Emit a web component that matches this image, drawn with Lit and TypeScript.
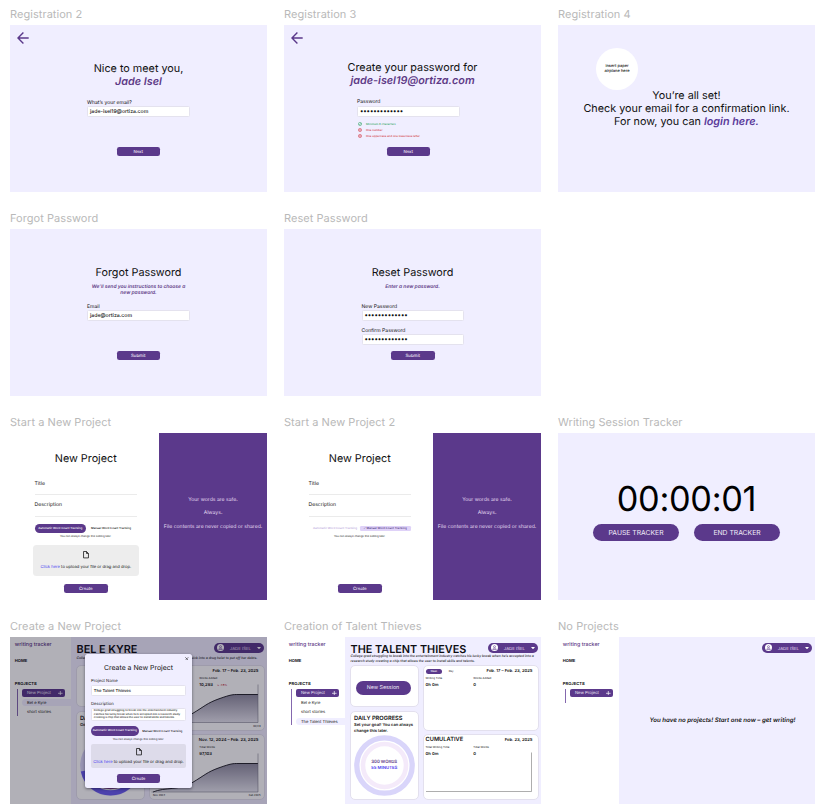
import { LitElement, html, svg, css } from "lit";
import { customElement } from "lit/decorators.js";

const DOTS = "•".repeat(13);

@customElement("app-root")
export class AppRoot extends LitElement {
  static styles = css`
    :host {
      display: block;
      width: 827px;
      height: 812px;
      overflow: hidden;
      background: #fff;
      color: #111;
      font-family: Inter, "Liberation Sans", sans-serif;
      text-rendering: geometricPrecision;
    }
    * { box-sizing: border-box; }
    svg { display: block; flex: none; }
    .board {
      display: grid;
      grid-template-columns: repeat(3, 257px);
      grid-auto-rows: 204px;
      column-gap: 17px;
      padding: 5px 0 0 10px;
    }
    .label {
      height: 20px;
      line-height: 19px;
      font-size: 11px;
      color: #b9b9b9;
      letter-spacing: 0.05px;
      white-space: nowrap;
    }
    .frame {
      position: relative;
      width: 257px;
      height: 167px;
      background: #f0eeff;
      overflow: hidden;
      white-space: nowrap;
    }
    .frame.split, .frame.dash { display: flex; background: #fff; }
    .back { position: absolute; left: 6.5px; top: 6.5px; }

    /* account screens */
    .h {
      font-size: 10.8px;
      line-height: 13px;
      text-align: center;
    }
    .auth { padding-top: 36.8px; }
    .auth.up { padding-top: 36.3px; }
    .em { font-weight: 600; font-style: italic; color: #5e3a86; }
    .link { font-weight: 600; font-style: italic; color: #5a3a9a; }
    .sub {
      margin-top: 5.4px;
      font-size: 4.95px;
      line-height: 6.2px;
      text-align: center;
      font-weight: 600;
      font-style: italic;
      color: #5e3a86;
    }
    .form { width: 102.5px; margin: 11.3px 0 0 77px; }
    .form.reg3 { margin-left: 73px; }
    .form.forgot { margin-top: 6.9px; }
    .form.reset { margin: 13.1px 0 0 77.5px; }
    .fl { height: 6px; font-size: 5.05px; line-height: 8.8px; }
    .in {
      height: 11px;
      margin-top: 1px;
      padding-left: 2px;
      font-size: 5.2px;
      line-height: 10.6px;
      background: #fff;
      border: 1px solid #e4e2ee;
      border-radius: 1.5px;
      font-weight: 500;
    }
    .reg3 .fl { line-height: 6.6px; }
    .forgot .in, .reset .in { margin-top: 0.6px; }
    .in.dots { font-size: 6.4px; letter-spacing: -0.1px; line-height: 9.6px; }
    .in + .fl { margin-top: 6px; }
    .btn {
      width: 43.5px;
      height: 9.2px;
      margin: 29.5px auto 0;
      border-radius: 2.3px;
      background: #5b398b;
      color: #efeaf7;
      font-size: 4.3px;
      line-height: 11.4px;
      text-align: center;
      font-weight: 500;
    }
    .reg3 .btn { margin-top: 7.8px; }
    .reset .btn { margin-top: 6px; }
    .rules {
      display: grid;
      row-gap: 0;
      padding: 4px 0 0 1px;
      font-size: 2.8px;
      font-weight: 500;
    }
    .rule { display: flex; align-items: center; gap: 4px; height: 6.2px; color: #d23b45; }
    .rule.ok { color: #2ea563; }
    .plane {
      display: flex;
      align-items: center;
      justify-content: center;
      width: 42px;
      height: 42px;
      margin: 23px 0 0 38px;
      border-radius: 50%;
      background: #fff;
      font-size: 4px;
      line-height: 4.9px;
      text-align: center;
      font-weight: 500;
    }
    .set { margin-top: -0.6px; }

    /* project form */
    .left { width: 149px; padding: 18.5px 22px 0 24.5px; }
    .line {
      height: 22px;
      padding-top: 7.5px;
      font-size: 5.1px;
      line-height: 6px;
      border-bottom: 1px solid #ebebeb;
    }
    .line.second { padding-top: 7.2px; }
    .line.first { height: 23.5px; margin-top: 7px; padding-top: 9.2px; }
    .toggle {
      display: flex;
      align-items: center;
      height: 9.4px;
      margin-top: 6.7px;
      font-size: 2.9px;
      font-weight: 500;
    }
    .toggle .on {
      width: 51.5px;
      height: 9.4px;
      line-height: 9.4px;
      margin-right: 5px;
      border-radius: 5px;
      background: #5b398b;
      color: #fff;
      text-align: center;
    }
    .toggle .off { width: 51px; padding-left: 4.5px; color: #bba9dc; }
    .toggle .chip {
      width: 51px;
      height: 5px;
      line-height: 5px;
      border-radius: 1.3px;
      background: #dfd2f8;
      color: #4c3480;
      text-align: center;
    }
    .note { font-size: 2.7px; line-height: 4px; margin-top: 1.3px; text-align: center; width: 102.5px; }
    .drop {
      display: flex;
      flex-direction: column;
      align-items: center;
      width: 106px;
      height: 31px;
      margin: 6.8px 0 0 -1.7px;
      padding-top: 6px;
      border-radius: 3.5px;
      background: #ededed;
      font-size: 4.12px;
      line-height: 5px;
    }
    .drop svg { margin-bottom: 5.8px; }
    .blue { color: #4b3df0; }
    .left .btn { margin: 7.8px 0 0 29.5px; }
    .left .btn.low { margin-top: 45.6px; }
    .right {
      display: flex;
      flex-direction: column;
      justify-content: center;
      width: 108px;
      background: #5b398b;
      color: #e3daf0;
      font-size: 5.1px;
      line-height: 13.7px;
      text-align: center;
      padding-bottom: 4.6px;
    }

    /* session tracker */
    .timer { padding-top: 45.5px; font-size: 34.3px; letter-spacing: -0.3px; line-height: 42px; color: #000; text-align: center; }
    .pair { display: flex; justify-content: center; gap: 15.7px; margin-top: 3.5px; }
    .big {
      width: 85.3px;
      height: 17px;
      border-radius: 9px;
      background: #5b398b;
      color: #efeaf7;
      font-size: 6.8px;
      line-height: 17.4px;
      text-align: center;
    }

    /* dashboard */
    .side { width: 60.5px; padding: 4.8px 0 0 4.8px; background: #fff; }
    .brand { font-size: 5.3px; line-height: 7.6px; height: 6px; font-weight: 500; color: #5e3a86; }
    .cap { font-size: 4.1px; line-height: 5px; font-weight: 700; margin-top: 10.2px; }
    .cap.p { margin-top: 17.8px; }
    .tree { margin: 3px 0 0 2.2px; border-left: 1px solid #8468ae; padding: 0 0 0.6px 4.3px; }
    .tree.empty { padding-bottom: 3.5px; }
    .np {
      display: flex;
      align-items: center;
      justify-content: space-between;
      width: 43px;
      height: 8.7px;
      padding: 0 2.6px 0 4.6px;
      margin-bottom: 1.6px;
      border-radius: 2px;
      background: #5b398b;
      color: #efeaf7;
      font-size: 4.2px;
    }
    .item { height: 7px; margin-top: 2.3px; padding-left: 4.7px; font-size: 4.1px; line-height: 7px; }
    .np + .item { margin-top: 0; }
    .item.act { background: #f0eeff; border-radius: 3.5px 0 0 3.5px; }
    .main { position: relative; width: 196.5px; padding-left: 5px; background: #f0eeff; }
    .head { height: 27.5px; padding: 6.6px 0 0 1px; }
    .title { font-size: 10.85px; line-height: 10px; font-weight: 600; color: #0d0d12; }
    .desc { font-size: 3.35px; line-height: 5.1px; margin-top: 0.6px; font-style: italic; font-weight: 500; }
    .desc.one { margin-top: 2.2px; }
    .user {
      position: absolute;
      right: 3px;
      top: 6px;
      display: flex;
      align-items: center;
      justify-content: space-between;
      width: 50.3px;
      height: 9.8px;
      padding: 0 3px 0 3px;
      border-radius: 5px;
      background: #5b398b;
      color: #e3daf0;
      font-size: 4.3px;
    }
    .user span { padding-top: 2.4px; }
    .cards { display: flex; gap: 4px; }
    .col1 { display: flex; flex-direction: column; gap: 4.5px; width: 69px; }
    .col2 { display: flex; flex-direction: column; gap: 3px; width: 116px; }
    .card {
      position: relative;
      background: #fff;
      border: 1px solid #e3e0ee;
      border-radius: 5px;
      overflow: hidden;
    }
    .c1 { height: 42px; padding: 15.5px 0 0 5px; }
    .c2 { height: 88.5px; padding: 3.5px 0 0 3.5px; }
    .c3 { height: 66px; padding: 3.2px 5px 0 2px; }
    .new {
      width: 55px;
      height: 14px;
      border-radius: 7px;
      background: #5b398b;
      color: #efeaf7;
      font-size: 5.3px;
      line-height: 15.6px;
      text-align: center;
    }
    .ct { font-size: 5.7px; line-height: 6px; font-weight: 600; }
    .cs { font-size: 4.1px; line-height: 5.4px; font-weight: 600; margin-top: 0.6px; }
    .ring { position: absolute; left: 3.2px; top: 23.2px; }
    .goal {
      position: absolute;
      left: 0;
      top: 48.2px;
      width: 67.5px;
      text-align: center;
      font-size: 4.3px;
      line-height: 5.9px;
      font-weight: 600;
      color: #5e3a86;
    }
    .row { display: flex; align-items: center; height: 5.5px; }
    .date { margin-left: auto; font-size: 4.2px; font-weight: 600; }
    .wk {
      width: 16.7px;
      height: 5px;
      border-radius: 2.5px;
      background: #5b398b;
      color: #fff;
      font-size: 2.6px;
      line-height: 5px;
      text-align: center;
    }
    .wk + span { font-size: 2.6px; margin-left: 6.5px; }
    .stats { display: grid; grid-template-columns: 47.8px 1fr; margin-top: 2.2px; }
    .sl { font-size: 2.8px; line-height: 4px; }
    .sv { font-size: 4.2px; line-height: 5px; font-weight: 600; margin-top: 2.4px; }
    .red { color: #c4243c; font-size: 2.6px; margin-left: 4px; }
    .chart { position: absolute; left: -0.5px; top: -0.5px; }
    .ax { position: absolute; bottom: 1.4px; font-size: 2.6px; line-height: 4px; }
    .ax.l { left: 3.5px; }
    .ax.r { right: 3px; }
    .veil { position: absolute; inset: 0; background: rgba(12, 8, 32, 0.32); }
    .modal {
      position: absolute;
      left: 75px;
      top: 17px;
      width: 107px;
      height: 133.5px;
      padding: 9.8px 6px 0 6px;
      border-radius: 2.5px;
      background: #f0eeff;
      box-shadow: 0 1px 3px rgba(10, 5, 30, 0.5);
    }
    .x { position: absolute; right: 3px; top: 2.6px; }
    .mh { font-size: 6.9px; line-height: 8.4px; text-align: center; }
    .ml { font-size: 4.2px; line-height: 5px; margin-top: 6.3px; }
    .mi {
      height: 11px;
      margin-top: 1px;
      padding-left: 1.8px;
      background: #fff;
      border: 1px solid #e4e2ee;
      border-radius: 1.5px;
      font-size: 4.1px;
      line-height: 9.4px;
      font-weight: 500;
    }
    .mt { height: 13px; padding-top: 0.7px; font-size: 2.75px; line-height: 3.35px; }
    .modal .toggle { margin-top: 5.7px; }
    .modal .toggle .on { width: 47.7px; margin-right: 3.6px; }
    .modal .note { width: auto; }
    .modal .drop {
      width: 95px;
      height: 23.5px;
      margin: 3.2px 0 0;
      padding-top: 3.8px;
      border-radius: 2px;
      background: #dddbea;
    }
    .modal .drop svg { margin-bottom: 3.4px; }
    .modal .btn { margin-top: 5.8px; height: 9.8px; line-height: 11.4px; }
    .none {
      padding: 80px 0 0;
      font-size: 6.1px;
      line-height: 8.2px;
      font-weight: 600;
      font-style: italic;
      text-align: center;
      margin-left: 10.5px;
      width: 187px;
    }
    .main.bare { padding-left: 0; }
  `;

  private frame(label: string, cls: string, body: unknown) {
    return html`<section><div class="label">${label}</div><div class="frame ${cls}">${body}</div></section>`;
  }

  private back() {
    return html`<svg class="back" width="12" height="12" viewBox="0 0 12 12" fill="none" stroke="#5b398b" stroke-width="1.4">
      <path d="M11.7 6H1.2M6.4 .6L1 6l5.4 5.4" />
    </svg>`;
  }

  private mark(ok: boolean) {
    return html`<svg width="4" height="4" viewBox="0 0 8 8" fill="none" stroke="currentColor" stroke-width="1.1">
      <circle cx="4" cy="4" r="3.2" />
      ${ok ? svg`<path d="M2.4 4l1.2 1.3 3-3.4" />` : svg`<path d="M2.6 2.6l2.8 2.8M5.4 2.6L2.6 5.4" />`}
    </svg>`;
  }

  private file() {
    return html`<svg width="6" height="7.4" viewBox="0 0 12 15" fill="none" stroke="#161616" stroke-width="1.6">
      <path d="M1 1h6l4 4v9H1zM7 1v4h4" />
    </svg>`;
  }

  private drop() {
    return html`<div class="drop">${this.file()}<div><span class="blue">Click here</span> to upload your file or drag and drop.</div></div>`;
  }

  private autoToggle() {
    return html`<div class="toggle"><div class="on">Automatic Word Count Tracking</div><div>Manual Word Count Tracking</div></div>`;
  }

  private project(auto: boolean) {
    return html`
      <div class="left">
        <div class="h">New Project</div>
        <div class="line first">Title</div>
        <div class="line second">Description</div>
        ${auto
          ? this.autoToggle()
          : html`<div class="toggle"><div class="off">Automatic Word Count Tracking</div><div class="chip">✓ Manual Word Count Tracking</div></div>`}
        <div class="note">You can always change this setting later.</div>
        ${auto ? this.drop() : ""}
        <div class="btn ${auto ? "" : "low"}">Create</div>
      </div>
      <div class="right">
        <div>Your words are safe.</div>
        <div>Always.</div>
        <div>File contents are never copied or shared.</div>
      </div>`;
  }

  private side(items: string[], active: string) {
    return html`<div class="side">
      <div class="brand">writing tracker</div>
      <div class="cap">HOME</div>
      <div class="cap p">PROJECTS</div>
      <div class="tree ${items.length ? "" : "empty"}">
        <div class="np"><span>New Project</span>
          <svg width="4.6" height="4.6" viewBox="0 0 4.6 4.6" stroke="#fff" stroke-width=".7"><path d="M2.3 0v4.6M0 2.3h4.6" /></svg>
        </div>
        ${items.map((i) => html`<div class="item ${i === active ? "act" : ""}">${i}</div>`)}
      </div>
    </div>`;
  }

  private user() {
    return html`<div class="user">
      <svg width="7" height="7" viewBox="0 0 14 14"><circle cx="7" cy="7" r="7" fill="#fff" />
        <g fill="none" stroke="#5b398b" stroke-width="1.1"><circle cx="7" cy="5.3" r="2" /><path d="M3.4 11c.4-2 1.8-2.7 3.6-2.7s3.2.7 3.6 2.7z" /></g></svg>
      <span>JADE ISEL</span>
      <svg width="4" height="2.4" viewBox="0 0 4 2.4"><path d="M0 0h4L2 2.3z" fill="#fff" /></svg>
    </div>`;
  }

  private ring(filled: boolean) {
    return html`<svg class="ring" width="61" height="61" viewBox="0 0 61 61" fill="none">
      <circle cx="30.5" cy="30.5" r="27.7" stroke="#d9d5fa" stroke-width="5.3" />
      <circle cx="30.5" cy="30.5" r="21.5" stroke="#f4eafa" stroke-width="4.6" />
      ${filled
        ? svg`<path d="M3.4 36A27.7 27.7 0 0 0 57.6 36" stroke="#6a5cf0" stroke-width="5.3" />
            <path d="M13 43A21.5 21.5 0 0 0 48 43" stroke="#8a4a9c" stroke-width="4.6" />`
        : ""}
    </svg>`;
  }

  private curve(baseY: number, topY: number) {
    const line = `M4 ${baseY}C16 ${baseY - 5} 30 ${topY + 27} 43 ${topY + 19.3}S58 ${topY + 8.6} 70 ${topY + 4.3}S84 ${topY} 89 ${topY}H109`;
    return html`<svg class="chart" width="116" height="66" viewBox="0 0 116 66" fill="none">
      <defs><linearGradient id="shade" x1="0" y1="0" x2="0" y2="1">
        <stop offset="0" stop-color="#8f8da0" /><stop offset="1" stop-color="#e6e5ee" />
      </linearGradient></defs>
      <path d="${line}V${baseY}z" fill="url(#shade)" />
      <path d=${line} stroke="#15151c" stroke-width=".9" />
      <path d="M2.5 ${baseY}H109V${topY - 10}" stroke="#666576" stroke-width=".5" />
    </svg>`;
  }

  private kyre() {
    return html`
      ${this.side(["Bel e Kyre", "short stories"], "Bel e Kyre")}
      <div class="main">
        <div class="head">
          <div class="title">BEL E KYRE</div>
          <div class="desc one">College dropout Bel is pulled home by her brother Kyre, who tricks her quick into a drug heist to put off her debts.</div>
        </div>
        ${this.user()}
        <div class="cards">
          <div class="col1">
            <div class="card c1"></div>
            <div class="card c2">
              <div class="ct">DAILY PROGRESS</div>
              <div class="cs">Goal: 300 words</div>
              ${this.ring(true)}
            </div>
          </div>
          <div class="col2">
            <div class="card c3">
              ${this.curve(57.5, 29.5)}
              <div class="row"><div class="date">Feb. 17 – Feb. 23, 2025</div></div>
              <div class="stats">
                <div class="sl"></div><div class="sl">Words Added</div>
                <div class="sv"></div><div class="sv">10,293<span class="red">↘ -1.6%</span></div>
              </div>
              <div class="ax r">02/23</div>
            </div>
            <div class="card c3">
              ${this.curve(58, 29.5)}
              <div class="row"><div class="date">Nov. 12, 2024 – Feb. 23, 2025</div></div>
              <div class="stats">
                <div class="sl"></div><div class="sl">Total Words</div>
                <div class="sv"></div><div class="sv">97,103</div>
              </div>
              <div class="ax l">Nov 2024</div>
              <div class="ax r">Feb 2025</div>
            </div>
          </div>
        </div>
      </div>
      <div class="veil"></div>
      <div class="modal">
        <svg class="x" width="3.6" height="3.6" viewBox="0 0 4 4" stroke="#111" stroke-width=".6"><path d="M.3 .3l3.4 3.4M3.7 .3L.3 3.7" /></svg>
        <div class="mh">Create a New Project</div>
        <div class="ml">Project Name</div>
        <div class="mi">The Talent Thieves</div>
        <div class="ml">Description</div>
        <div class="mi mt">College grad struggling to break into the entertainment industry<br />catches his lucky break when he’s accepted into a research study<br />creating a chip that allows the user to install skills and talents.</div>
        ${this.autoToggle()}
        <div class="note">You can always change this setting later.</div>
        ${this.drop()}
        <div class="btn">Create</div>
      </div>`;
  }

  private thieves() {
    return html`
      ${this.side(["Bel e Kyre", "short stories", "The Talent Thieves"], "The Talent Thieves")}
      <div class="main">
        <div class="head">
          <div class="title">THE TALENT THIEVES</div>
          <div class="desc">College grad struggling to break into the entertainment industry catches his lucky break when he’s accepted into a<br />research study creating a chip that allows the user to install skills and talents.</div>
        </div>
        ${this.user()}
        <div class="cards">
          <div class="col1">
            <div class="card c1"><div class="new">New Session</div></div>
            <div class="card c2">
              <div class="ct">DAILY PROGRESS</div>
              <div class="cs">Set your goal! You can always<br />change this later.</div>
              ${this.ring(false)}
              <div class="goal">300 WORDS<br /><span class="blue">55 MINUTES</span></div>
            </div>
          </div>
          <div class="col2">
            <div class="card c3">
              <div class="row"><div class="wk">Week</div><span>Day</span><div class="date">Feb. 17 – Feb. 23, 2025</div></div>
              <div class="stats">
                <div class="sl">Writing Time</div><div class="sl">Words Added</div>
                <div class="sv">0h 0m</div><div class="sv">0</div>
              </div>
            </div>
            <div class="card c3">
              <svg class="chart" width="116" height="66" viewBox="0 0 116 66" fill="none" stroke="#777" stroke-width=".6"><path d="M3 57.5H108.5V18.5" /></svg>
              <div class="row"><div class="ct">CUMULATIVE</div><div class="date">Feb. 23, 2025</div></div>
              <div class="stats">
                <div class="sl">Total Writing Time</div><div class="sl">Total Words</div>
                <div class="sv">0h 0m</div><div class="sv">0</div>
              </div>
            </div>
          </div>
        </div>
      </div>`;
  }

  render() {
    return html`<div class="board">
      ${this.frame("Registration 2", "auth", html`${this.back()}
        <div class="h">Nice to meet you,<br /><span class="em">Jade Isel</span></div>
        <div class="form">
          <div class="fl">What’s your email?</div>
          <div class="in">jade-isel19@ortiza.com</div>
          <div class="btn">Next</div>
        </div>`)}
      ${this.frame("Registration 3", "auth up", html`${this.back()}
        <div class="h">Create your password for<br /><span class="em">jade-isel19@ortiza.com</span></div>
        <div class="form reg3">
          <div class="fl">Password</div>
          <div class="in dots">${DOTS}</div>
          <div class="rules">
            <div class="rule ok">${this.mark(true)}<span>Minimum 8 characters</span></div>
            <div class="rule">${this.mark(false)}<span>One number</span></div>
            <div class="rule">${this.mark(false)}<span>One uppercase and one lowercase letter</span></div>
          </div>
          <div class="btn">Next</div>
        </div>`)}
      ${this.frame("Registration 4", "", html`
        <div class="plane">insert paper<br />airplane here</div>
        <div class="h set">You’re all set!<br />Check your email for a confirmation link.<br />For now, you can <span class="link">login here.</span></div>`)}
      ${this.frame("Forgot Password", "auth", html`
        <div class="h">Forgot Password</div>
        <div class="sub">We’ll send you instructions to choose a<br />new password.</div>
        <div class="form forgot">
          <div class="fl">Email</div>
          <div class="in">jade@ortiza.com</div>
          <div class="btn">Submit</div>
        </div>`)}
      ${this.frame("Reset Password", "auth", html`
        <div class="h">Reset Password</div>
        <div class="sub">Enter a new password.</div>
        <div class="form reset">
          <div class="fl">New Password</div>
          <div class="in dots">${DOTS}</div>
          <div class="fl">Confirm Password</div>
          <div class="in dots">${DOTS}</div>
          <div class="btn">Submit</div>
        </div>`)}
      <section></section>
      ${this.frame("Start a New Project", "split", this.project(true))}
      ${this.frame("Start a New Project 2", "split", this.project(false))}
      ${this.frame("Writing Session Tracker", "", html`
        <div class="timer">00:00:01</div>
        <div class="pair"><div class="big">PAUSE TRACKER</div><div class="big">END TRACKER</div></div>`)}
      ${this.frame("Create a New Project", "dash", this.kyre())}
      ${this.frame("Creation of Talent Thieves", "dash", this.thieves())}
      ${this.frame("No Projects", "dash", html`${this.side([], "")}
        <div class="main bare">${this.user()}<div class="none">You have no projects! Start one now – get writing!</div></div>`)}
    </div>`;
  }
}
